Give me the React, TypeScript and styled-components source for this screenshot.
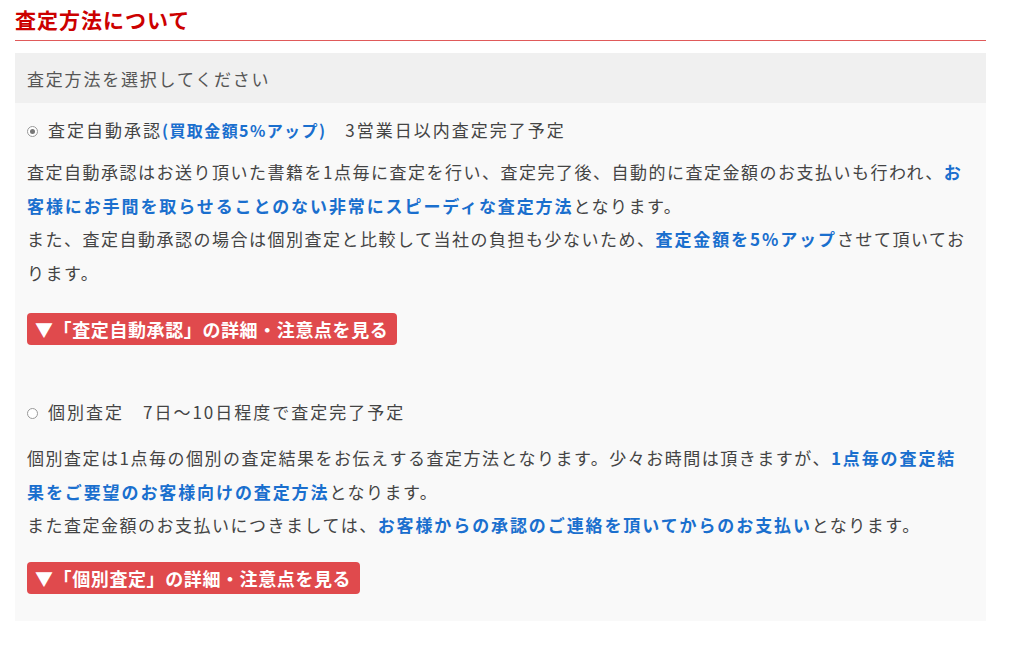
import React, { FC } from "react";
import styled, { createGlobalStyle } from "styled-components";

const GlobalStyle = createGlobalStyle`
  body {
    margin: 0;
    background: #fff;
    font-family: "Noto Sans CJK JP", "Noto Sans", sans-serif;
    color: #444;
  }
`;

const Page = styled.div`
  padding: 0 38px 0 15px;
`;

const Title = styled.h2`
  margin: 0;
  padding: 4px 0 6px;
  font-size: 21px;
  line-height: 30px;
  font-weight: 700;
  letter-spacing: 1px;
  color: #cc0000;
  border-bottom: 1px solid #e05a5a;
`;

const Panel = styled.section`
  margin-top: 12px;
  background: #f9f9f9;
  padding-bottom: 27px;
`;

const PanelHead = styled.div`
  background: #f0f0f0;
  padding: 0 12px;
  height: 50px;
  display: flex;
  align-items: center;
  font-size: 17px;
  color: #555;
  letter-spacing: 1.8px;
`;

const Option = styled.div<{ $gap: number }>`
  padding: ${(p) => p.$gap}px 12px 0;
`;

const Choice = styled.label`
  display: flex;
  align-items: center;
  gap: 10px;
  font-size: 17px;
  letter-spacing: 2px;
  line-height: 30px;
  color: #444;
`;

const Radio = styled.span<{ $on?: boolean }>`
  flex: none;
  width: 11px;
  height: 11px;
  border-radius: 50%;
  border: 1px solid #999;
  background: #fff;
  box-sizing: border-box;
  display: inline-flex;
  align-items: center;
  justify-content: center;
  margin-top: 2px;
  &::after {
    content: "";
    width: 5px;
    height: 5px;
    border-radius: 50%;
    background: ${(p) => (p.$on ? "#777" : "transparent")};
  }
`;

const Bonus = styled.b`
  color: #1a6fce;
  font-size: 16px;
  letter-spacing: 1.4px;
`;

const Text = styled.p<{ $top: number }>`
  margin: ${(p) => p.$top}px 0 0;
  font-size: 17px;
  letter-spacing: 1.5px;
  line-height: 33.5px;
  color: #444;
`;

const Em = styled.b`
  color: #1a6fce;
  letter-spacing: 1.9px;
`;

const More = styled.button<{ $top: number }>`
  margin-top: ${(p) => p.$top}px;
  display: inline-block;
  background: #e04a4d;
  color: #fff;
  border: none;
  border-radius: 4px;
  padding: 0 9px 0 8px;
  height: 32px;
  font-family: inherit;
  font-size: 18px;
  font-weight: 700;
  letter-spacing: 0.6px;
  cursor: pointer;
`;

const App: FC = () => (
  <Page>
    <GlobalStyle />
    <Title>査定方法について</Title>
    <Panel>
      <PanelHead>査定方法を選択してください</PanelHead>
      <Option $gap={12}>
        <Choice>
          <Radio $on />
          <span>
            査定自動承認<Bonus>(買取金額5%アップ)</Bonus>　3営業日以内査定完了予定
          </span>
        </Choice>
        <Text $top={10}>
          査定自動承認はお送り頂いた書籍を1点毎に査定を行い、査定完了後、自動的に査定金額のお支払いも行われ、
          <Em>お客様にお手間を取らせることのない非常にスピーディな査定方法</Em>となります。
          <br />
          また、査定自動承認の場合は個別査定と比較して当社の負担も少ないため、
          <Em>査定金額を5%アップ</Em>させて頂いております。
        </Text>
        <More $top={24}>▼「査定自動承認」の詳細・注意点を見る</More>
      </Option>
      <Option $gap={52}>
        <Choice>
          <Radio />
          <span>個別査定　7日〜10日程度で査定完了予定</span>
        </Choice>
        <Text $top={14}>
          個別査定は1点毎の個別の査定結果をお伝えする査定方法となります。少々お時間は頂きますが、
          <Em>1点毎の査定結果をご要望のお客様向けの査定方法</Em>となります。
          <br />
          また査定金額のお支払いにつきましては、
          <Em>お客様からの承認のご連絡を頂いてからのお支払い</Em>となります。
        </Text>
        <More $top={20}>▼「個別査定」の詳細・注意点を見る</More>
      </Option>
    </Panel>
  </Page>
);

export default App;
